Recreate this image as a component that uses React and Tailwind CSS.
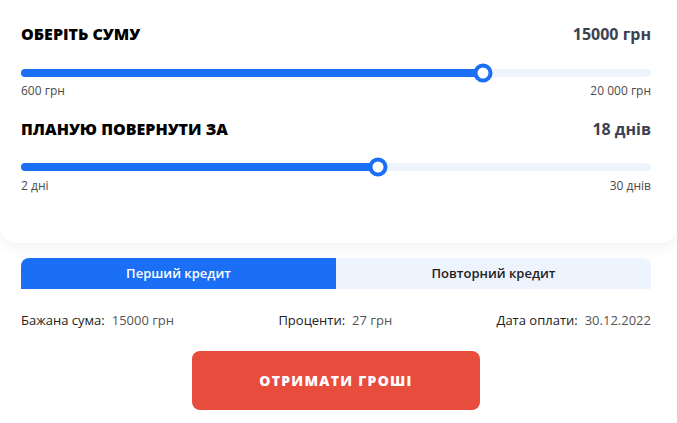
import React from "react";

function Slider({ percent }) {
  return (
    <div className="relative h-2 rounded-full bg-[#eef4fd]">
      <div
        className="absolute left-0 top-0 h-2 rounded-full bg-[#1a6ff5]"
        style={{ width: `${percent}%` }}
      />
      <div
        className="absolute top-1/2 h-[19px] w-[19px] -translate-x-1/2 -translate-y-1/2 rounded-full border-[4px] border-[#1a6ff5] bg-white"
        style={{ left: `${percent}%` }}
      />
    </div>
  );
}

function Info({ label, value }) {
  return (
    <p className="text-[13px] leading-5 text-[#222]">
      {label}:<span className="ml-[7px] text-[#555]">{value}</span>
    </p>
  );
}

export default function App() {
  return (
    <div className="min-h-screen bg-white font-['Open_Sans',sans-serif]">
      <div className="rounded-b-2xl bg-white pl-[21px] pr-[26px] pt-6 pb-[49px] shadow-[0_4px_14px_rgba(0,0,0,0.06)]">
        <div className="flex h-5 items-center justify-between">
          <h2 className="text-[16px] font-extrabold uppercase text-black">Оберіть суму</h2>
          <span className="text-[16px] font-bold text-[#3c4250]">15000 грн</span>
        </div>
        <div className="mt-[25px]">
          <Slider percent={73.3} />
        </div>
        <div className="mt-[6px] flex justify-between text-xs leading-4 text-[#4a4a4a]">
          <span>600 грн</span>
          <span>20 000 грн</span>
        </div>

        <div className="mt-5 flex h-5 items-center justify-between">
          <h2 className="text-[16px] font-extrabold uppercase text-black">Планую повернути за</h2>
          <span className="text-[16px] font-bold text-[#3c4250]">18 днів</span>
        </div>
        <div className="mt-6">
          <Slider percent={56.7} />
        </div>
        <div className="mt-[7px] flex justify-between text-xs leading-4 text-[#4a4a4a]">
          <span>2 дні</span>
          <span>30 днів</span>
        </div>
      </div>

      <div className="pl-[21px] pr-[26px]">
        <div className="mt-[15px] flex h-[31px] overflow-hidden rounded-t-lg">
          <button className="flex-1 bg-[#1a6ff5] text-[13px] font-semibold text-white">
            Перший кредит
          </button>
          <button className="flex-1 bg-[#eef4fd] text-[13px] font-semibold text-[#222]">
            Повторний кредит
          </button>
        </div>

        <div className="mt-[21px] flex justify-between">
          <Info label="Бажана сума" value="15000 грн" />
          <Info label="Проценти" value="27 грн" />
          <Info label="Дата оплати" value="30.12.2022" />
        </div>

        <div className="mt-[21px] flex justify-center">
          <button className="h-[59px] w-[288px] rounded-lg bg-[#e84c3d] text-[14px] font-extrabold uppercase tracking-[0.09em] text-white">
            Отримати гроші
          </button>
        </div>
      </div>
    </div>
  );
}
